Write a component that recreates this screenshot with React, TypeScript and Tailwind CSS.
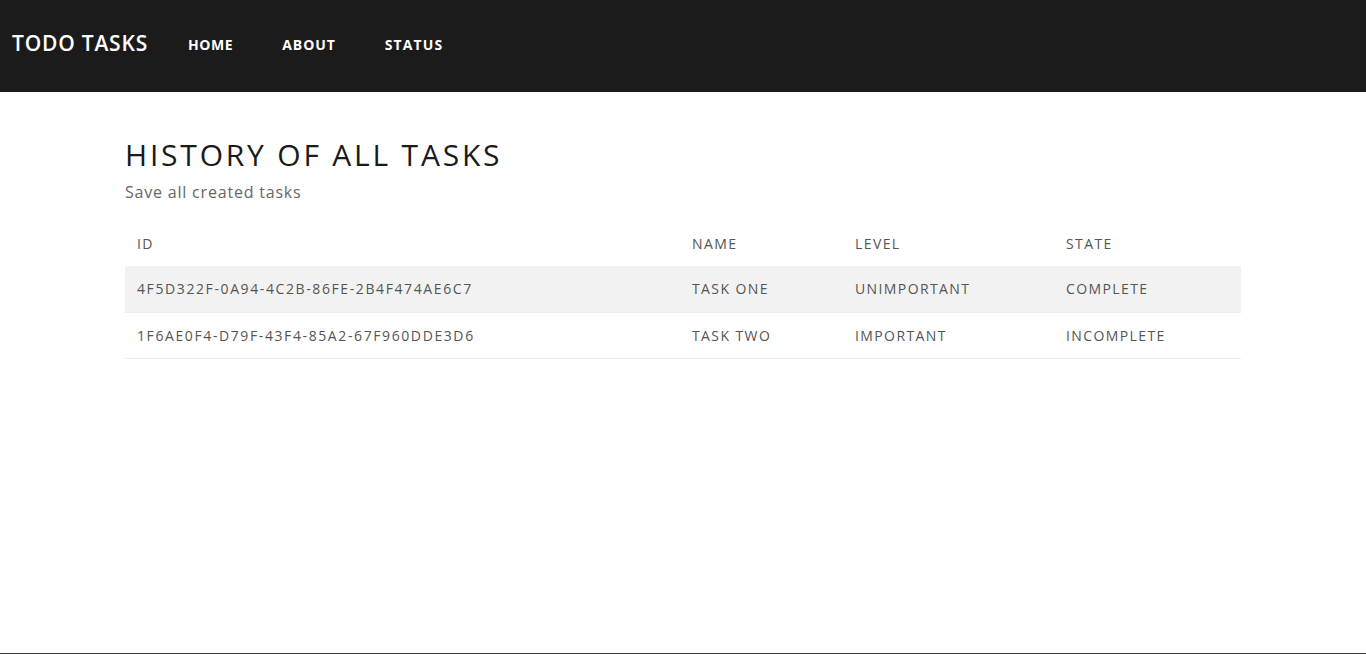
import React from "react";

const tasks = [
  { id: "4F5D322F-0A94-4C2B-86FE-2B4F474AE6C7", name: "TASK ONE", level: "UNIMPORTANT", state: "COMPLETE" },
  { id: "1F6AE0F4-D79F-43F4-85A2-67F960DDE3D6", name: "TASK TWO", level: "IMPORTANT", state: "INCOMPLETE" },
];

export default function App() {
  return (
    <div className="min-h-screen flex flex-col bg-white border-b border-[#3a3a3a] font-['Open_Sans',sans-serif]">
      {/* Top navigation */}
      <nav className="h-[92px] bg-[#1b1b1b] flex items-center px-3 pb-[4px]">
        <span className="text-white text-[21px] font-semibold tracking-[0.8px]">TODO TASKS</span>
        <ul className="flex items-center ml-10 gap-[49px]">
          <li className="text-white text-[14px] font-bold tracking-[0.6px]">HOME</li>
          <li className="text-white text-[14px] font-bold tracking-[0.9px]">ABOUT</li>
          <li className="text-white text-[14px] font-bold tracking-[1.1px]">STATUS</li>
        </ul>
      </nav>

      <main className="w-[1116px] mx-auto pt-[44px]">
        <h1 className="text-[#1a1a1a] text-[30px] font-normal tracking-[2.8px] leading-[38px]">HISTORY OF ALL TASKS</h1>
        <p className="text-[#666] text-[16px] tracking-[0.8px] mt-[6px]">Save all created tasks</p>

        <table className="w-full mt-[16px] text-[14px] text-[#555] tracking-[1.4px] border-collapse">
          <thead>
            <tr className="h-[46px] text-left">
              <th className="font-normal px-3 w-[555px]">ID</th>
              <th className="font-normal px-3 w-[163px]">NAME</th>
              <th className="font-normal px-3 w-[211px]">LEVEL</th>
              <th className="font-normal px-3">STATE</th>
            </tr>
          </thead>
          <tbody>
            {tasks.map((t, i) => (
              <tr key={t.id} className={`h-[46px] border-b border-[#eee] ${i % 2 === 0 ? "bg-[#f2f2f2]" : ""}`}>
                <td className="px-3 tracking-[1.6px]">{t.id}</td>
                <td className="px-3">{t.name}</td>
                <td className="px-3">{t.level}</td>
                <td className="px-3">{t.state}</td>
              </tr>
            ))}
          </tbody>
        </table>
      </main>
    </div>
  );
}
